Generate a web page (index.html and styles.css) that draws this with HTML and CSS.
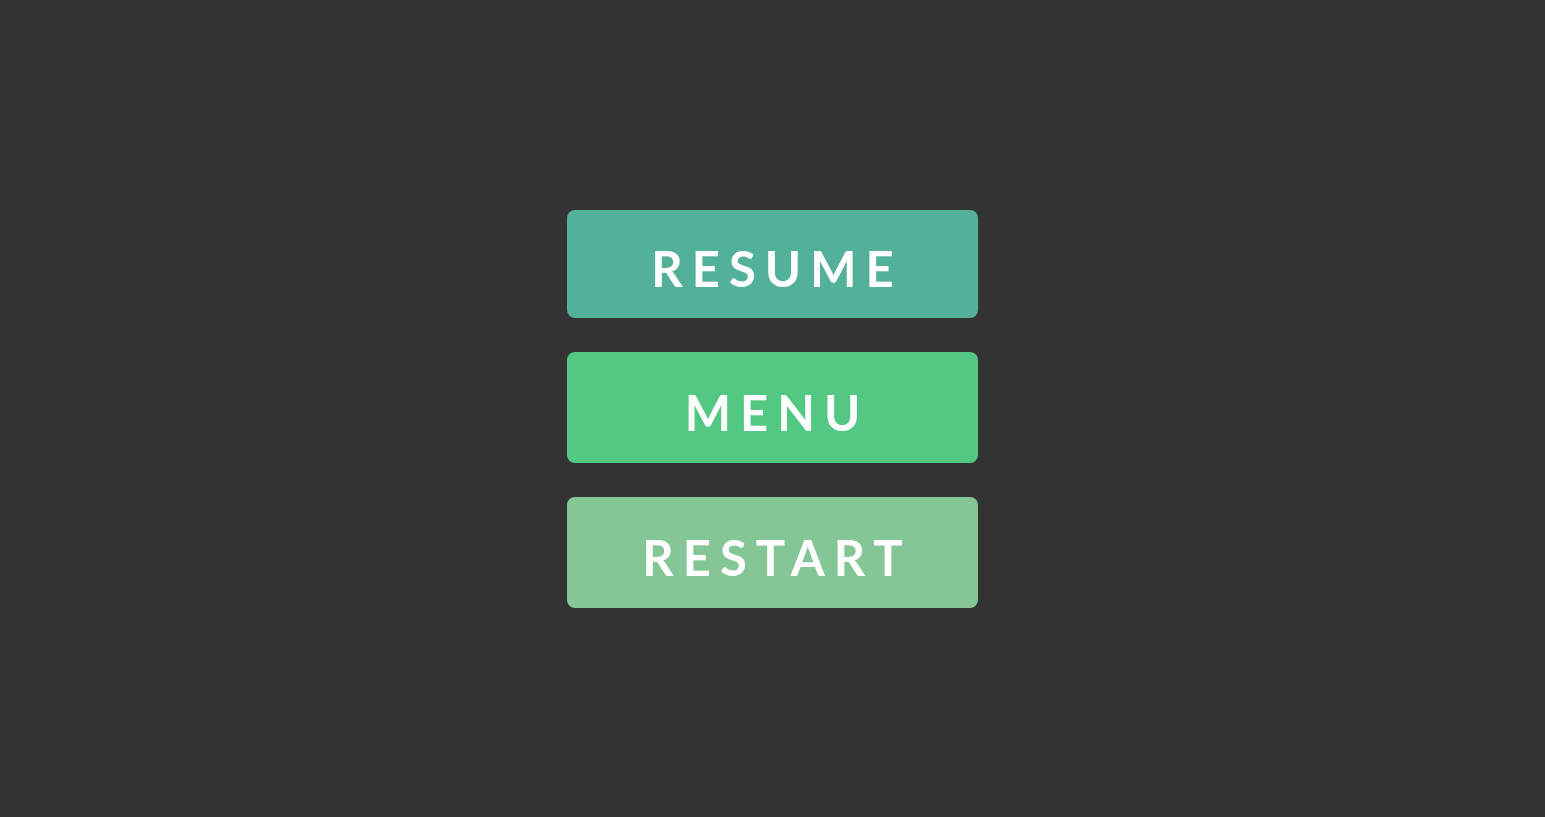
FILE: index.html
```html
<!DOCTYPE html>
<html>
<head>
<meta charset="utf-8">
<link rel="stylesheet" href="styles.css">
</head>
<body>
<div class="menu">
  <button class="btn btn-resume">RESUME</button>
  <button class="btn btn-menu">MENU</button>
  <button class="btn btn-restart">RESTART</button>
</div>
</body>
</html>
```

FILE: styles.css
```css
html, body {
  margin: 0;
  padding: 0;
  height: 100%;
  background: #333333;
}
body {
  display: flex;
  align-items: center;
  justify-content: center;
}
.menu {
  display: flex;
  flex-direction: column;
  gap: 34px;
  padding-top: 1px;
}
.btn {
  width: 411px;
  height: 111px;
  border: none;
  border-radius: 8px;
  color: #ffffff;
  font-family: "Lato", "Liberation Sans", sans-serif;
  font-weight: 700;
  font-size: 49px;
  letter-spacing: 9px;
  padding: 8px 0 0 9px;
  display: flex;
  align-items: center;
  justify-content: center;
  box-sizing: border-box;
}
.btn-resume {
  height: 108px;
  background: #52b198;
}
.btn-menu {
  background: #52c883;
}
.btn-restart {
  background: #85c697;
}
```
